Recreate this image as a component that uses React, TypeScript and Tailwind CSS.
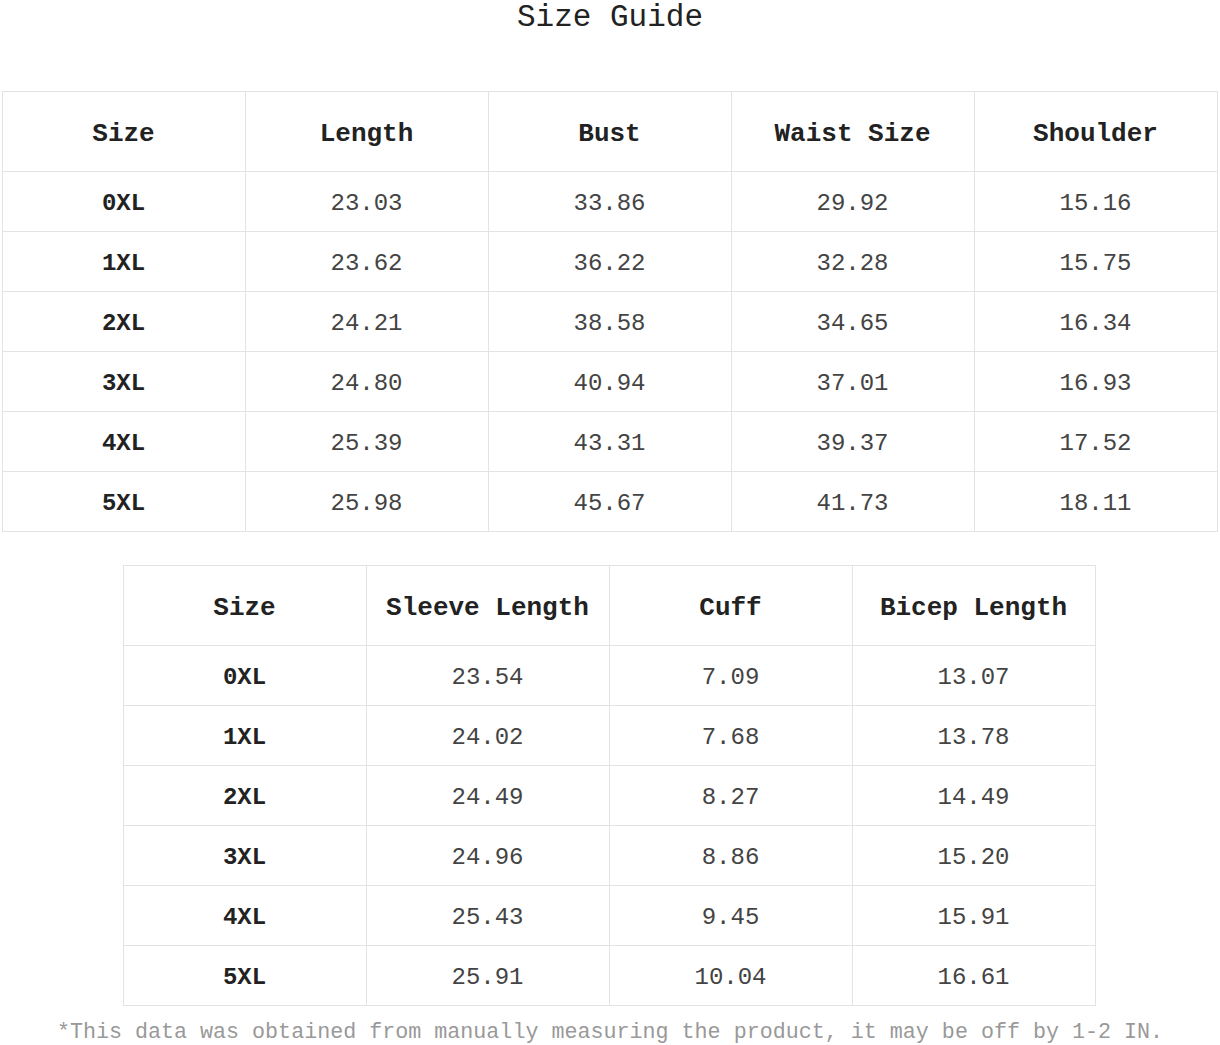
import React from "react";

const font = { fontFamily: '"Liberation Mono", "DejaVu Sans Mono", monospace' };

const mainHeaders = ["Size", "Length", "Bust", "Waist Size", "Shoulder"];
const mainRows = [
  ["0XL", "23.03", "33.86", "29.92", "15.16"],
  ["1XL", "23.62", "36.22", "32.28", "15.75"],
  ["2XL", "24.21", "38.58", "34.65", "16.34"],
  ["3XL", "24.80", "40.94", "37.01", "16.93"],
  ["4XL", "25.39", "43.31", "39.37", "17.52"],
  ["5XL", "25.98", "45.67", "41.73", "18.11"],
];

const sleeveHeaders = ["Size", "Sleeve Length", "Cuff", "Bicep Length"];
const sleeveRows = [
  ["0XL", "23.54", "7.09", "13.07"],
  ["1XL", "24.02", "7.68", "13.78"],
  ["2XL", "24.49", "8.27", "14.49"],
  ["3XL", "24.96", "8.86", "15.20"],
  ["4XL", "25.43", "9.45", "15.91"],
  ["5XL", "25.91", "10.04", "16.61"],
];

interface SizeTableProps {
  headers: string[];
  rows: string[][];
}

const SizeTable: React.FC<SizeTableProps> = ({ headers, rows }) => {
  return (
    <table className="table-fixed border-collapse">
      <thead>
        <tr className="h-[80px]">
          {headers.map((h) => (
            <th
              key={h}
              className="w-[243px] border border-[#e3e3e3] pt-[6px] text-center text-[26px] font-bold text-[#222]"
            >
              {h}
            </th>
          ))}
        </tr>
      </thead>
      <tbody>
        {rows.map((row) => (
          <tr key={row[0]} className="h-[60px]">
            {row.map((cell, i) => (
              <td
                key={i}
                className={`border border-[#e3e3e3] pt-[5px] text-center text-[24px] ${
                  i === 0 ? "font-bold text-[#222]" : "text-[#444]"
                }`}
              >
                {cell}
              </td>
            ))}
          </tr>
        ))}
      </tbody>
    </table>
  );
};

export default function App() {
  return (
    <div className="w-[1220px] h-[1045px] bg-white overflow-hidden" style={font}>
      {/* Title */}
      <h1 className="h-[35px] text-center text-[31px] leading-[35px] text-[#222]">
        Size Guide
      </h1>

      {/* Body measurements */}
      <div className="mt-[56px] flex justify-center pr-[1px]">
        <SizeTable headers={mainHeaders} rows={mainRows} />
      </div>

      {/* Sleeve measurements */}
      <div className="mt-[33px] flex justify-center pr-[2px]">
        <SizeTable headers={sleeveHeaders} rows={sleeveRows} />
      </div>

      {/* Note */}
      <p className="mt-[11px] text-center text-[21.7px] leading-[32px] text-[#999]">
        *This data was obtained from manually measuring the product, it may be off by 1-2 IN.
      </p>
    </div>
  );
}
